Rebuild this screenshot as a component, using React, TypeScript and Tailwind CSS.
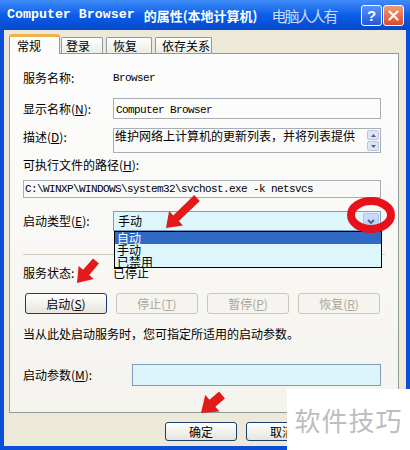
import React from "react";

function arrowPoints(tx: number, ty: number, hx: number, hy: number, shaft = 7, headW = 18, headL = 13) {
  const dx = hx - tx, dy = hy - ty;
  const len = Math.hypot(dx, dy);
  const ux = dx / len, uy = dy / len;
  const px = -uy, py = ux;
  const bx = hx - ux * headL, by = hy - uy * headL;
  const s = shaft / 2, h = headW / 2;
  const pts = [
    [tx + px * s, ty + py * s],
    [bx + px * s, by + py * s],
    [bx + px * h, by + py * h],
    [hx, hy],
    [bx - px * h, by - py * h],
    [bx - px * s, by - py * s],
    [tx - px * s, ty - py * s],
  ];
  return pts.map((p) => p.map((v) => v.toFixed(1)).join(",")).join(" ");
}

const CJK = "font-['Noto_Sans_CJK_SC','Noto_Sans',sans-serif]";
const MONO = "font-['Liberation_Mono','Noto_Sans_CJK_SC',monospace]";

function Btn({ children, disabled, w = "w-[82px]", h = "h-[21px]" }: { children: React.ReactNode; disabled?: boolean; w?: string; h?: string }) {
  return (
    <div
      className={
        `${w} ${h} flex items-center justify-center rounded-[3px] border text-[12px] leading-none ${CJK} ` +
        (disabled
          ? "border-[#c9c7ba] bg-[#f5f4ee] text-[#aca899]"
          : "border-[#1c3c6c] bg-gradient-to-b from-[#ffffff] to-[#e6e4dc] text-black")
      }
    >
      {children}
    </div>
  );
}

export default function App() {
  return (
    <div className={`relative w-[410px] h-[450px] overflow-hidden bg-[#0b4fd8] ${CJK}`}>
      {/* Title bar */}
      <div className="h-[30px] flex items-center bg-gradient-to-b from-[#3f8cf8] via-[#0a5ee8] to-[#0449cc] pl-[7px] pr-[6px]">
        <span className={`text-white font-bold text-[13.3px] leading-none font-['Liberation_Mono',monospace]`}>Computer Browser</span>
        <span className="text-white font-bold text-[13px] leading-none ml-[9px]">的属性(本地计算机)</span>
        <span className="text-[#c4dbff] text-[15px] leading-none ml-[14px] tracking-[-2px]">电脑人人有</span>
        <div className="flex-1" />
        <div className="w-[21px] h-[21px] rounded-[3px] border border-white bg-gradient-to-b from-[#5a8ff5] to-[#2458d8] flex items-center justify-center text-white font-bold text-[15px] leading-none font-['Liberation_Sans',sans-serif]">?</div>
        <div className="w-[21px] h-[21px] ml-[1px] rounded-[3px] border border-white bg-gradient-to-b from-[#f09a78] to-[#d9482a] flex items-center justify-center">
          <svg width="11" height="11" viewBox="0 0 11 11">
            <path d="M1.5 1.5 L9.5 9.5 M9.5 1.5 L1.5 9.5" stroke="white" strokeWidth="2.2" strokeLinecap="round" />
          </svg>
        </div>
      </div>

      {/* Body */}
      <div className="mx-[4px] h-[416px] bg-[#ece9d8] flex flex-col">
        {/* Tabs */}
        <div className="mt-[3px] ml-[5px] h-[20px] flex items-end relative z-10">
          <div className="w-[51px] h-[20px] -mb-px border border-b-0 border-[#919b9c] border-t-[3px] border-t-[#f0b14a] rounded-t-[3px] bg-[#fcfcfe] text-[12px] leading-none text-black pl-[7px] pt-[3px]">常规</div>
          <div className="w-[42px] h-[16px] ml-[1px] border border-b-0 border-[#919b9c] rounded-t-[2px] bg-gradient-to-b from-white to-[#ecebe5] text-[12px] leading-none text-black pl-[4px] pt-[2px]">登录</div>
          <div className="w-[46px] h-[16px] ml-[3px] border border-b-0 border-[#919b9c] rounded-t-[2px] bg-gradient-to-b from-white to-[#ecebe5] text-[12px] leading-none text-black pl-[6px] pt-[2px]">恢复</div>
          <div className="w-[57px] h-[16px] ml-[3px] border border-b-0 border-[#919b9c] rounded-t-[2px] bg-gradient-to-b from-white to-[#ecebe5] text-[12px] leading-none text-black pl-[6px] pt-[2px]">依存关系</div>
        </div>

        {/* Panel */}
        <div className="ml-[5px] w-[390px] h-[360px] border border-[#919b9c] bg-gradient-to-b from-[#fdfdfd] to-[#f4f3ee] flex flex-col pl-[13px] text-[12px] leading-none text-black">
          {/* 服务名称 */}
          <div className="mt-[16px] h-[16px] flex items-center">
            <span className="w-[90px]">服务名称:</span>
            <span className={`${MONO} text-[11px] tracking-[-0.6px]`}>Browser</span>
          </div>
          {/* 显示名称 */}
          <div className="mt-[12px] h-[21px] flex items-center">
            <span className="w-[90px]">显示名称(<u>N</u>):</span>
            <div className="w-[268px] h-[21px] border border-[#a9aeb4] pl-[2px] pt-[3px]">
              <span className={`${MONO} text-[11px] tracking-[-0.6px]`}>Computer Browser</span>
            </div>
          </div>
          {/* 描述 */}
          <div className="mt-[9px] h-[25px] flex items-start">
            <span className="w-[90px] pt-[3px]">描述(<u>D</u>):</span>
            <div className="w-[268px] h-[25px] border border-[#a9aeb4] pl-[1px] pt-[1px] flex">
              <span className="flex-1 whitespace-nowrap">维护网络上计算机的更新列表，并将列表提供</span>
              <div className="w-[12px] mr-[1px] flex flex-col gap-[1px]">
                <div className="h-[10px] bg-[#dde4f2] border border-[#b9c6e2] rounded-[2px] flex items-center justify-center">
                  <svg width="5" height="3" viewBox="0 0 5 3"><path d="M0 3 L2.5 0 L5 3 Z" fill="#4d6185" /></svg>
                </div>
                <div className="h-[10px] bg-[#dde4f2] border border-[#b9c6e2] rounded-[2px] flex items-center justify-center">
                  <svg width="5" height="3" viewBox="0 0 5 3"><path d="M0 0 L2.5 3 L5 0 Z" fill="#4d6185" /></svg>
                </div>
              </div>
            </div>
          </div>
          {/* 可执行文件的路径 */}
          <div className="mt-[4px] h-[16px] flex items-center">可执行文件的路径(<u>H</u>):</div>
          <div className="mt-[7px] w-[358px] h-[18px] border border-[#a9aeb4] pl-[1px] flex items-center">
            <span className={`${MONO} text-[11px] tracking-[-0.6px]`}>C:\WINXP\WINDOWS\system32\svchost.exe -k netsvcs</span>
          </div>
          {/* 启动类型 */}
          <div className="mt-[13px] h-[20px] flex items-center relative">
            <span className="w-[90px]">启动类型(<u>E</u>):</span>
            <div className="w-[268px] h-[20px] border border-[#7f9db9] bg-[#dcf6fc] pl-[4px] flex items-center">
              <span className="flex-1">手动</span>
              <div className="w-[16px] h-[17px] mr-[1px] rounded-[2px] bg-gradient-to-b from-[#cfdcfb] to-[#b6c9f4] border border-[#b0c4f0] flex items-center justify-center">
                <svg width="8" height="5" viewBox="0 0 8 5"><path d="M1 1 L4 4 L7 1" stroke="#4d6185" strokeWidth="1.8" fill="none" /></svg>
              </div>
            </div>
            {/* dropdown list */}
            <div className="absolute left-[91px] top-[20px] w-[268px] h-[37px] border border-black bg-[#dcf6fc] z-20 flex flex-col text-[12px] leading-[12px]">
              <div className="h-[12px] bg-[#316ac5] text-white pl-[2px]">自动</div>
              <div className="h-[12px] pl-[2px]">手动</div>
              <div className="h-[12px] pl-[2px]">已禁用</div>
            </div>
          </div>
          {/* separator */}
          <div className="mt-[23px] w-[362px] h-px bg-[#d0d0bf]" />
          {/* 服务状态 */}
          <div className="mt-[10px] h-[16px] flex items-center">
            <span className="w-[90px]">服务状态:</span>
            <span>已停止</span>
          </div>
          {/* buttons */}
          <div className="mt-[12px] h-[21px] flex pl-[2px] gap-[9px]">
            <Btn>启动(<u>S</u>)</Btn>
            <Btn disabled>停止(<u>T</u>)</Btn>
            <Btn disabled>暂停(<u>P</u>)</Btn>
            <Btn disabled>恢复(<u>R</u>)</Btn>
          </div>
          {/* hint */}
          <div className="mt-[12px] h-[16px] flex items-center">当从此处启动服务时，您可指定所适用的启动参数。</div>
          {/* 启动参数 */}
          <div className="mt-[22px] h-[22px] flex items-center">
            <span className="w-[109px]">启动参数(<u>M</u>):</span>
            <div className="w-[249px] h-[22px] border border-[#7f9db9] bg-[#dcf5fb]" />
          </div>
        </div>

        {/* Bottom buttons */}
        <div className="mt-[9px] h-[19px] flex pl-[161px] gap-[9px]">
          <Btn w="w-[72px]" h="h-[19px]">确定</Btn>
          <Btn w="w-[72px]" h="h-[19px]">取消</Btn>
        </div>
      </div>

      {/* Watermark box */}
      <div className="absolute left-[287px] top-[389px] w-[123px] h-[61px] bg-white flex items-center justify-center z-30">
        <span className="text-[26px] leading-none text-[#bdbdbd] tracking-[1px]">软件技巧</span>
      </div>

      {/* Red annotations */}
      <svg className="absolute left-0 top-0 pointer-events-none z-20" width="410" height="450" viewBox="0 0 410 450">
        <ellipse cx="371" cy="215" rx="20" ry="14" fill="none" stroke="#e8101a" strokeWidth="8" />
        <polygon points={arrowPoints(197, 198, 166, 228, 8, 20, 14)} fill="#e21a1a" />
        <polygon points={arrowPoints(96, 261, 77, 283, 8, 20, 14)} fill="#e21a1a" />
        <polygon points={arrowPoints(222, 395, 201, 413, 9, 22, 15)} fill="#e21a1a" />
      </svg>
    </div>
  );
}
